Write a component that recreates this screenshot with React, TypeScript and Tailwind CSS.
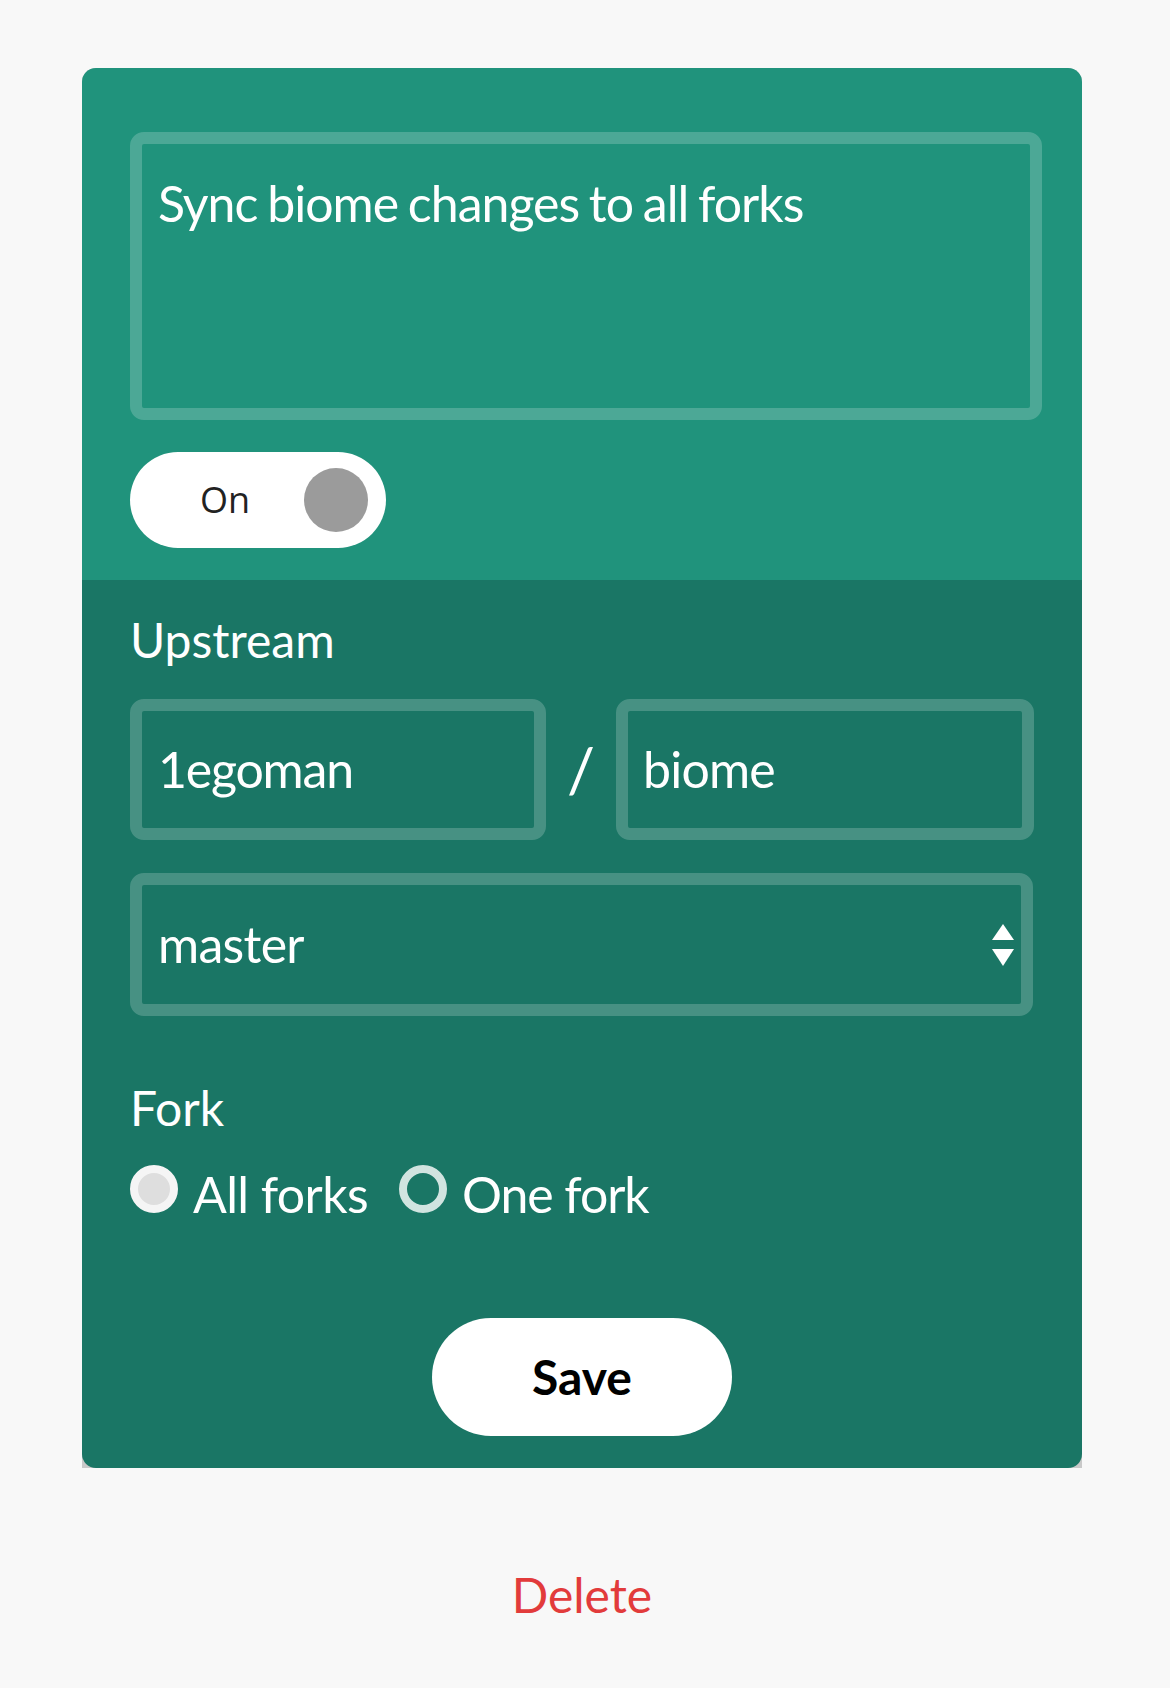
import * as React from 'react'

function Toggle() {
  return (
    <div className="mt-[32px] flex h-[96px] w-[256px] items-center rounded-full bg-white">
      <span className="pl-[70px] font-['Open_Sans',sans-serif] text-[36px] leading-none text-[#222]">On</span>
      <span className="ml-auto mr-[18px] size-[64px] rounded-full bg-[#9b9b9b]" />
    </div>
  )
}

function Radio({ checked, label, track }: { checked?: boolean; label: string; track: string }) {
  return (
    <label className="flex items-start">
      <span
        className={
          checked
            ? 'mt-[1px] size-[48px] rounded-full border-[8px] border-[#f5f5f5] bg-[#dedede]'
            : 'mt-[1px] size-[48px] rounded-full border-[8px] border-white/80'
        }
      />
      <span className={'ml-[15px] text-[50px] leading-[1.2] text-white ' + track}>{label}</span>
    </label>
  )
}

export default function App() {
  return (
    <div className="min-h-[1688px] bg-[#f8f8f8] pt-[68px] font-['Lato',sans-serif]">
      <div className="ml-[82px] w-[1000px] rounded-t-[14px] bg-[#c9c9c9]">
        <div className="rounded-t-[14px] bg-[#20937c] pb-[32px] pl-[48px] pt-[64px]">
          <textarea
            readOnly
            defaultValue="Sync biome changes to all forks"
            className="block h-[288px] w-[912px] resize-none rounded-[14px] border-[12px] border-white/20 bg-transparent px-[16px] pt-[29px] text-[50px] leading-[1.2] tracking-[-1px] text-white outline-none [word-spacing:-2px]"
          />
          <Toggle />
        </div>

        <div className="rounded-b-[14px] bg-[#1a7665] px-[48px] pb-[32px] pt-[31px]">
          <div className="text-[48px] leading-[1.2] text-white">Upstream</div>

          <div className="mt-[30px] flex items-center">
            <input
              readOnly
              defaultValue="1egoman"
              className="h-[141px] w-[416px] rounded-[14px] border-[12px] border-white/20 bg-transparent px-[16px] text-[50px] tracking-[-1.2px] text-white outline-none"
            />
            <span className="flex-1 text-center text-[62px] leading-none text-white">/</span>
            <input
              readOnly
              defaultValue="biome"
              className="h-[141px] w-[418px] rounded-[14px] border-[12px] border-white/20 bg-transparent px-[15px] text-[50px] tracking-[-0.8px] text-white outline-none"
            />
          </div>

          <div className="relative mt-[33px] flex h-[143px] w-[903px] items-center rounded-[14px] border-[12px] border-white/20 px-[16px]">
            <span className="text-[50px] leading-[1.2] tracking-[-0.7px] text-white">master</span>
            <svg className="absolute right-[7px] top-[39px]" width="22" height="42" viewBox="0 0 22 42">
              <path d="M11 0 L22 16 L0 16 Z" fill="#fff" />
              <path d="M0 25 L22 25 L11 42 Z" fill="#fff" />
            </svg>
          </div>

          <div className="mt-[63px] text-[48px] leading-[1.2] text-white">Fork</div>

          <div className="mt-[28px] flex items-start gap-[31px]">
            <Radio checked label="All forks" track="tracking-[-0.6px]" />
            <Radio label="One fork" track="tracking-[-1.1px]" />
          </div>

          <div className="mt-[94px] flex justify-center">
            <button className="h-[118px] w-[300px] rounded-full bg-white text-[48px] font-bold text-black">
              Save
            </button>
          </div>
        </div>
      </div>

      <div className="mt-[98px] w-[1164px] text-center text-[48px] leading-[1.2] text-[#e23b3b]">Delete</div>
    </div>
  )
}
